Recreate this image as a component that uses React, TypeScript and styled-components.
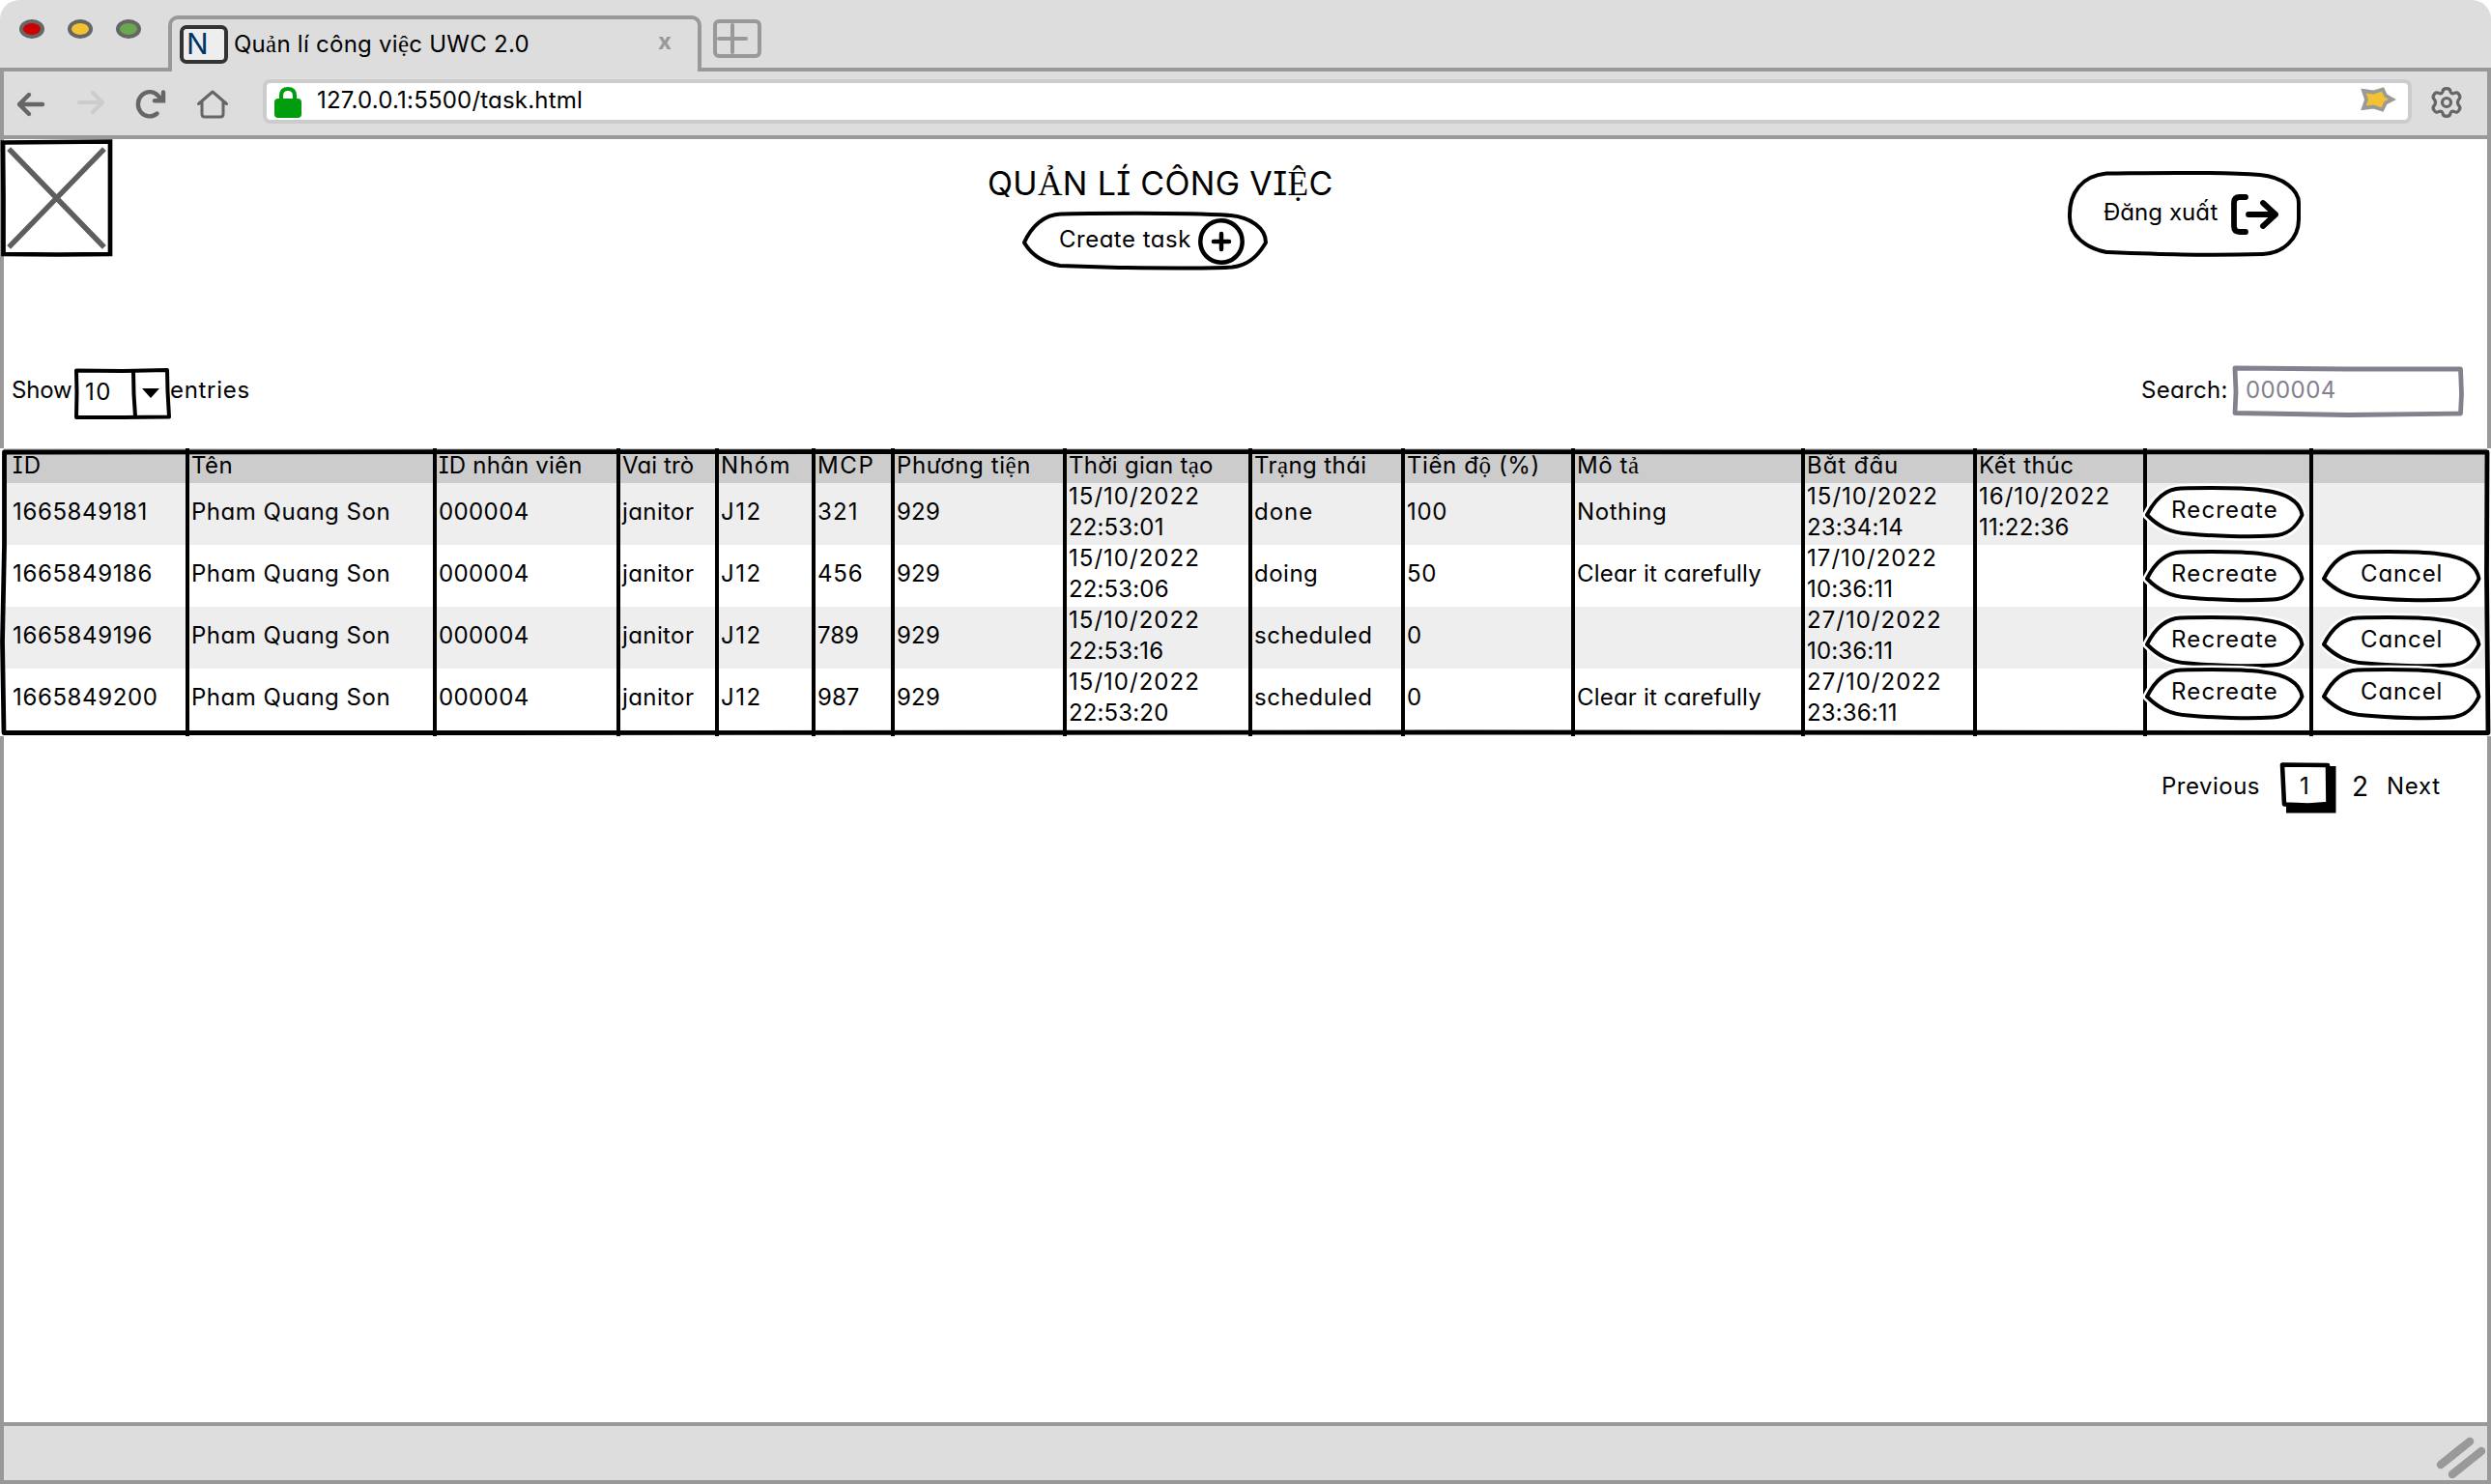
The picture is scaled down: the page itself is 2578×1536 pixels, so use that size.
import React from 'react';
import styled, { createGlobalStyle } from 'styled-components';

const GlobalStyle = createGlobalStyle`
  * { box-sizing: border-box; }
  body {
    margin: 0;
    background: #fff;
    color: #000;
    font: 24px/32px Inter, "Noto Sans", sans-serif;
    font-feature-settings: "cv11", "cv08";
    white-space: nowrap;
  }
`;

/* ---------- text ---------- */

const TRACKING: Record<string, number> = {
  'Quản lí công việc UWC 2.0': 0.26,
  '127.0.0.1:5500/task.html': 0.2,
  'QUẢN LÍ CÔNG VIỆC': 0.32,
  'Create task': 0.5,
  'Đăng xuất': 0.05,
  Show: -0.2,
  '10': 1.5,
  entries: 0.7,
  'Search:': 0.3,
  '000004': 0.4,
  ID: 1.2,
  Tên: 0.5,
  'ID nhân viên': 0.2,
  'Vai trò': 0.1,
  Nhóm: 1.3,
  MCP: 1.6,
  'Phương tiện': 0.6,
  'Thời gian tạo': 0.28,
  'Trạng thái': 0.4,
  'Tiến độ (%)': 0.6,
  'Mô tả': 0.6,
  'Bắt đầu': 0.95,
  'Kết thúc': 0.6,
  'Pham Quang Son': 0.52,
  janitor: 0.4,
  J12: 1.5,
  '321': 1.1,
  '456': 0.8,
  '789': 0,
  '987': 0,
  '929': 0.24,
  done: 1,
  doing: 0.5,
  scheduled: 0.5,
  Nothing: 0.6,
  'Clear it carefully': 0.18,
  Recreate: 1.15,
  Cancel: 0.9,
  Previous: 0.5,
  Next: 0.7,
};

const trackingOf = (text: string) => {
  if (text in TRACKING) return TRACKING[text];
  if (text.includes('/')) return 1.02;
  if (text.includes(':')) return 0.14;
  return 0.62;
};

const Label = styled.span<{ $tracking: number }>`
  letter-spacing: ${(p) => p.$tracking}px;
`;

const SerifGlyph = styled.span`
  font-family: "Liberation Serif", serif;
  font-size: 1.04em;
  line-height: 0;
`;

function Text({ children }: { children: string }) {
  return (
    <Label $tracking={trackingOf(children)}>
      {children.split(/([ảẢệỆạộ])/).map((part, i) => (i % 2 ? <SerifGlyph key={i}>{part}</SerifGlyph> : part))}
    </Label>
  );
}

/* ---------- window ---------- */

const Window = styled.div`
  width: 2578px;
  height: 1536px;
  display: flex;
  flex-direction: column;
  overflow: hidden;
`;

const TabStrip = styled.div`
  flex: none;
  height: 74px;
  display: flex;
  align-items: flex-start;
  background: #ddd;
  border-bottom: 4px solid #999;
  border-radius: 20px 20px 0 0;
`;

const Lights = styled.div`
  display: flex;
  gap: 24px;
  width: 174px;
  padding: 20px 0 0 20px;
`;

const Light = styled.i<{ $color: string }>`
  width: 26px;
  height: 20px;
  border: 4px solid #666;
  border-radius: 50%;
  background: ${(p) => p.$color};
`;

const Tab = styled.div`
  display: flex;
  align-items: flex-start;
  width: 552px;
  height: 58px;
  margin-top: 16px;
  padding: 6px 27px 0 8px;
  background: #ddd;
  border: 4px solid #999;
  border-bottom: 0;
  border-radius: 10px 10px 0 0;
`;

const Favicon = styled.div`
  width: 50px;
  height: 40px;
  padding-left: 3px;
  border: 4px solid #333;
  border-radius: 7px;
  background: #eee;
  color: #036;
  font-size: 30px;
  line-height: 31px;
`;

const TabTitle = styled.div`
  flex: 1;
  padding: 4px 0 0 6px;
`;

const TabClose = styled.div`
  color: #999;
  font-size: 24px;
  font-weight: 700;
  padding-top: 1px;
`;

const NewTab = styled.svg`
  width: 50px;
  height: 40px;
  margin: 20px 0 0 12px;
`;

const Toolbar = styled.div`
  flex: none;
  height: 70px;
  display: flex;
  align-items: flex-start;
  background: #ddd;
  border: 4px solid #999;
  border-top: 0;
`;

const NavIcons = styled.svg`
  width: 268px;
  height: 66px;
  fill: none;
  stroke: #666;
  stroke-linecap: round;
  stroke-linejoin: round;
`;

const AddressBar = styled.div`
  display: flex;
  align-items: flex-start;
  width: 2224px;
  height: 46px;
  margin-top: 8px;
  padding: 0 12px 0 7px;
  background: #fff;
  border: 4px solid #ccc;
  border-radius: 8px;
`;

const LockIcon = styled.svg`
  width: 30px;
  height: 38px;
`;

const Url = styled.div`
  flex: 1;
  padding: 2px 0 0 15px;
`;

const StarIcon = styled.svg`
  width: 38px;
  height: 32px;
  margin: 1px 0 0;
`;

const GearIcon = styled.svg`
  width: 36px;
  height: 36px;
  margin: 14px 0 0 18px;
`;

const Page = styled.main`
  flex: 1;
  background: #fff;
  border: 4px solid #999;
  border-width: 0 4px;
`;

const StatusBar = styled.footer`
  flex: none;
  height: 64px;
  display: flex;
  justify-content: flex-end;
  background: #ddd;
  border: 4px solid #999;
`;

/* ---------- page header ---------- */

const Header = styled.header`
  display: flex;
  align-items: flex-start;
  height: 236px;
`;

const Placeholder = styled.svg`
  flex: none;
  width: 116px;
  height: 122px;
  margin-left: -3px;
  overflow: visible;
`;

const TitleBlock = styled.div`
  width: 360px;
  margin-left: 905px;
  padding-top: 24px;
`;

const Title = styled.h1`
  margin: 0;
  font-size: 34px;
  font-weight: 400;
  line-height: 44px;
`;

const Outline = styled.svg`
  position: absolute;
  inset: 0;
  width: 100%;
  height: 100%;
  overflow: visible;
  fill: #fff;
  stroke: #000;
  stroke-width: 4;
  stroke-linejoin: round;
`;

const SketchButton = styled.button`
  position: relative;
  display: flex;
  align-items: flex-start;
  flex: none;
  padding: 0;
  border: 0;
  background: none;
  font: inherit;
  color: inherit;
  font-feature-settings: inherit;

  & > :not(svg:first-child) {
    position: relative;
  }
`;

const CreateButton = styled(SketchButton)`
  width: 254px;
  height: 60px;
  margin: 7px 0 0 36px;
  padding: 13px 0 0 38px;
`;

const LogoutButton = styled(SketchButton)`
  width: 240px;
  height: 89px;
  margin: 33px 0 0 759px;
  padding: 27px 0 0 36px;
`;

const PlusIcon = styled.svg`
  width: 50px;
  height: 50px;
  margin: -7px 0 0 6px;
`;

const ExitIcon = styled.svg`
  width: 50px;
  height: 46px;
  margin: -5px 0 0 13px;
`;

/* ---------- controls ---------- */

const Controls = styled.div`
  display: flex;
  align-items: flex-start;
  height: 84px;
  padding: 0 24px 0 8px;
`;

const ControlLabel = styled.label<{ $width: number }>`
  width: ${(p) => p.$width}px;
  padding-top: 8px;
`;

const Select = styled.div`
  position: relative;
  width: 99px;
  height: 54px;
  padding: 10px 0 0 11px;

  & > span {
    position: relative;
  }
`;

const SearchGroup = styled.div`
  display: flex;
  margin-left: auto;
`;

const SearchInput = styled.div`
  position: relative;
  width: 240px;
  height: 54px;
  margin-top: -2px;
  padding: 10px 0 0 14px;
  color: #82828e;

  & > span {
    position: relative;
  }
`;

/* ---------- table ---------- */

const COLUMNS = [192, 256, 190, 102, 100, 82, 178, 192, 158, 176, 238, 178, 176, 172, 188];

const Table = styled.div`
  position: relative;
  height: 298px;
  margin: 0 -4px;
  background: #fff;
`;

const Row = styled.div<{ $fill: string; $head?: boolean; $last?: boolean }>`
  display: grid;
  grid-template-columns: ${COLUMNS.map((w) => `${w}px`).join(' ')};
  grid-template-rows: 100%;
  height: ${(p) => (p.$head ? 36 : p.$last ? 70 : 64)}px;
  background: linear-gradient(${(p) => p.$fill}, ${(p) => p.$fill}) 4px 0 / 2570px 100% no-repeat;
`;

const Cell = styled.div<{ $head?: boolean; $last?: boolean; $action?: boolean }>`
  display: flex;
  flex-direction: column;
  justify-content: ${(p) => (p.$action ? 'flex-start' : 'center')};
  min-width: 0;
  padding: ${(p) => (p.$head ? 4 : 0)}px 0 ${(p) => (p.$last ? 6 : 0)}px 2px;
  border-left: 4px solid #000;

  &:first-child {
    border-left: 0;
    padding-left: 13px;
  }
`;

const Lines = styled.div`
  display: flex;
  flex-direction: column;
  margin-bottom: 4px;
`;

const RowButton = styled(SketchButton)<{ $top: number; $left: number; $inset: number }>`
  z-index: 1;
  width: 164px;
  height: 54px;
  margin: ${(p) => p.$top}px 0 0 ${(p) => p.$left}px;
  padding: 9px 0 0 ${(p) => p.$inset}px;
`;

const Halo = styled.path`
  stroke: #fff;
  stroke-width: 9;
`;

const Frame = styled.svg`
  position: absolute;
  left: 0;
  top: 0;
  width: 2578px;
  height: 298px;
  fill: none;
  stroke: #000;
  stroke-width: 4.8;
  stroke-linejoin: round;
`;

/* ---------- pager ---------- */

const Pager = styled.nav`
  display: flex;
  align-items: flex-start;
  justify-content: flex-end;
  padding: 27px 48px 0 0;
`;

const PagerItem = styled.span<{ $width: number; $big?: boolean }>`
  width: ${(p) => p.$width}px;
  padding-top: 9px;
  font-size: ${(p) => (p.$big ? 28 : 24)}px;
`;

const CurrentPage = styled.div`
  position: relative;
  width: 59px;
  height: 53px;
  margin-right: 16px;
  padding: 9px 0 0 21px;

  & > span {
    position: relative;
  }
`;

const TASKS = [
  ['1665849181', '321', '22:53:01', 'done', '100', 'Nothing', '15/10/2022 23:34:14', '16/10/2022 11:22:36'],
  ['1665849186', '456', '22:53:06', 'doing', '50', 'Clear it carefully', '17/10/2022 10:36:11', ''],
  ['1665849196', '789', '22:53:16', 'scheduled', '0', '', '27/10/2022 10:36:11', ''],
  ['1665849200', '987', '22:53:20', 'scheduled', '0', 'Clear it carefully', '27/10/2022 23:36:11', ''],
];

const BUTTON_TOPS = [
  [3, 0],
  [5, 5],
  [9, 9],
  [-1, -1],
];

const HEADINGS = [
  'ID', 'Tên', 'ID nhân viên', 'Vai trò', 'Nhóm', 'MCP', 'Phương tiện', 'Thời gian tạo',
  'Trạng thái', 'Tiến độ (%)', 'Mô tả', 'Bắt đầu', 'Kết thúc', '', '',
];

const PILL =
  'M2 30C9 16 20 3 37 2.5C65 2 95 1 122 4.5C144 7 160 15 162.5 30C156 44 147 51 132 51.5C108 53 70 52 45 49.5C25 48 14 42 2 30Z';

function ActionButton({ label, top, left, inset }: { label: string; top: number; left: number; inset: number }) {
  return (
    <RowButton $top={top} $left={left} $inset={inset}>
      <Outline viewBox="0 0 164 54">
        <Halo d={PILL} />
        <path d={PILL} />
      </Outline>
      <Text>{label}</Text>
    </RowButton>
  );
}

function TaskTable() {
  return (
    <Table>
      <Row $fill="#ccc" $head>
        {HEADINGS.map((h, i) => (
          <Cell key={i} $head>
            <Lines>{h && <Text>{h}</Text>}</Lines>
          </Cell>
        ))}
      </Row>
      {TASKS.map(([id, mcp, time, state, progress, note, start, end], r) => {
        const last = r === TASKS.length - 1;
        const cells: string[][] = [
          [id], ['Pham Quang Son'], ['000004'], ['janitor'], ['J12'], [mcp], ['929'],
          ['15/10/2022', time], [state], [progress], [note], start.split(' '), end.split(' '),
        ];
        return (
          <Row key={id} $fill={r % 2 ? '#fff' : '#eee'} $last={last}>
            {cells.map((lines, c) => (
              <Cell key={c} $last={last}>
                <Lines>{lines.map((line) => line && <Text key={line}>{line}</Text>)}</Lines>
              </Cell>
            ))}
            <Cell $action $last={last}>
              <ActionButton label="Recreate" top={BUTTON_TOPS[r][0]} left={-4} inset={27} />
            </Cell>
            <Cell $action $last={last}>
              {r > 0 && <ActionButton label="Cancel" top={BUTTON_TOPS[r][1]} left={7} inset={40} />}
            </Cell>
          </Row>
        );
      })}
      <Frame viewBox="0 0 2578 298">
        <path d="M4.500 4L900 3.500L1800 3.800L2574 4L2573.500 130L2575 294.500L1500 294L500 294.500L4 294.500L2.500 200L4.500 100Z" />
      </Frame>
    </Table>
  );
}

export default function App() {
  return (
    <Window>
      <GlobalStyle />
      <TabStrip>
        <Lights>
          <Light $color="#c00" />
          <Light $color="#f1c232" />
          <Light $color="#6aa84f" />
        </Lights>
        <Tab>
          <Favicon>N</Favicon>
          <TabTitle><Text>Quản lí công việc UWC 2.0</Text></TabTitle>
          <TabClose>x</TabClose>
        </Tab>
        <NewTab viewBox="0 0 50 40" fill="none" stroke="#999" strokeWidth="4" strokeLinecap="round">
          <rect x="2" y="2" width="46" height="36" rx="4" />
          <path d="M20 6V34M6 20H34" />
        </NewTab>
      </TabStrip>
      <Toolbar>
        <NavIcons viewBox="4 74 268 66">
          <path d="M44 108H20M30 98L20 108L30 118" strokeWidth="4.400" />
          <path d="M82 106H106M96 96L106 106L96 116" strokeWidth="4.200" stroke="#ccc" />
          <path d="M162.500 117.500A12 12.600 0 1 1 163.500 99L168 104M169 95.500V104.300H160" strokeWidth="4.400" strokeLinejoin="miter" />
          <path d="M205.500 107.500L220 95L234.500 107.500M209 105V118Q209 121 212 121H228Q231 121 231 118V105" strokeWidth="3" />
        </NavIcons>
        <AddressBar>
          <LockIcon viewBox="0 0 30 38">
            <path d="M8 19V13Q8 6 15 6T22 13V19" fill="none" stroke="#009e0f" strokeWidth="4.200" />
            <rect x="1" y="16" width="28" height="20" rx="4" fill="#009e0f" />
          </LockIcon>
          <Url><Text>127.0.0.1:5500/task.html</Text></Url>
          <StarIcon viewBox="2442 87 38 32">
            <path d="M2446 94L2456 95.500L2466 92.500L2469 99L2476 103L2469 106.500L2465.500 113.500L2456 110.500L2446 112L2449 103Z" fill="#f1c232" stroke="#999" strokeWidth="3.800" />
          </StarIcon>
        </AddressBar>
        <GearIcon viewBox="0 0 36 36" fill="none" stroke="#666" strokeWidth="3.200" strokeLinejoin="round">
          <path d="M14 7Q14 3.600 18 3.600T22 7Q23 9.500 26 8.500Q29 6.500 31 10Q33 13 30.500 15Q28.500 18 30.500 21Q33 23 31 26Q29 29.500 26 27.500Q23 26.500 22 29Q22 32.400 18 32.400T14 29Q13 26.500 10 27.500Q7 29.500 5 26Q3 23 5.500 21Q7.500 18 5.500 15Q3 13 5 10Q7 6.500 10 8.500Q13 9.500 14 7Z" />
          <circle cx="18" cy="18" r="4.500" />
        </GearIcon>
      </Toolbar>
      <Page>
        <Header>
          <Placeholder viewBox="0 0 116 122" fill="none">
            <path d="M2 3.500L60 3L113 2.500V119L60 119.500L2.500 119V60Z" fill="#fff" stroke="#000" strokeWidth="4.700" />
            <path d="M10 12L105 110M105 12L10 110" stroke="#5e5e5e" strokeWidth="5.400" strokeLinecap="square" />
          </Placeholder>
          <TitleBlock>
            <Title><Text>QUẢN LÍ CÔNG VIỆC</Text></Title>
            <CreateButton>
              <Outline viewBox="0 0 254 60">
                <path d="M2 32C9 16 22 3 40 2.500C80 2 160 0.500 216 4C236 6 252 17 252 32C244 46 234 56 217 57.500C190 59 150 58.500 100 58L39 56C22 53 10 46 2 32Z" />
              </Outline>
              <Text>Create task</Text>
              <PlusIcon viewBox="0 0 50 50" fill="none" stroke="#000" strokeLinecap="round">
                <circle cx="25" cy="25" r="21.700" strokeWidth="4.500" />
                <path d="M25 17V33M17 25H33" strokeWidth="4.500" />
              </PlusIcon>
            </CreateButton>
          </TitleBlock>
          <LogoutButton>
            <Outline viewBox="0 0 240 89">
              <path d="M39 2.500C90 2 150 0.500 198 4C222 6 238 20 238 33V50C238 70 222 85 201 86C140 88 90 86 39 84C18 80 1 67 1 48C0 22 14 5 39 2.500Z" />
            </Outline>
            <Text>Đăng xuất</Text>
            <ExitIcon viewBox="0 0 50 46" fill="none" stroke="#000" strokeWidth="5.800" strokeLinecap="round" strokeLinejoin="round">
              <path d="M16 5H10Q4 5 4 11V35Q4 41 10 41H16M19 23H47M34 11L47 23L34 35" />
            </ExitIcon>
          </LogoutButton>
        </Header>
        <Controls>
          <ControlLabel $width={65}><Text>Show</Text></ControlLabel>
          <Select>
            <Outline viewBox="0 0 99 54">
              <path d="M2 3.500L50 4L96 3L96.500 25L98 51.500L50 52H2L2.500 26Z" />
              <path d="M61 4Q61 28 63 51" />
              <path d="M70 22H88L79 32Z" fill="#000" stroke="none" />
            </Outline>
            <Text>10</Text>
          </Select>
          <ControlLabel $width={90}><Text>entries</Text></ControlLabel>
          <SearchGroup>
            <ControlLabel $width={94}><Text>Search:</Text></ControlLabel>
            <SearchInput>
              <Outline viewBox="0 0 240 54">
                <path d="M3 3L120 4L236.500 4L237.500 30L236.500 50L120 51.500L3 49.500L4 28Z" stroke="#82828e" strokeWidth="4.800" />
              </Outline>
              <Text>000004</Text>
            </SearchInput>
          </SearchGroup>
        </Controls>
        <TaskTable />
        <Pager>
          <PagerItem $width={122}><Text>Previous</Text></PagerItem>
          <CurrentPage>
            <Outline viewBox="0 0 59 53">
              <path d="M7 41H48V4H58.500V52.500H7Z" fill="#000" stroke="none" />
              <path d="M3 2.500L50 3L50.500 43L30 44.500L5 43.500Z" strokeWidth="4.600" />
            </Outline>
            <Text>1</Text>
          </CurrentPage>
          <PagerItem $width={36} $big><Text>2</Text></PagerItem>
          <PagerItem $width={56}><Text>Next</Text></PagerItem>
        </Pager>
      </Page>
      <StatusBar>
        <svg width="54" height="56" viewBox="2520 1476 54 56" stroke="#999" strokeWidth="8.500" strokeLinecap="round">
          <path d="M2526 1516L2556 1492M2538 1526L2568 1502" />
        </svg>
      </StatusBar>
    </Window>
  );
}
